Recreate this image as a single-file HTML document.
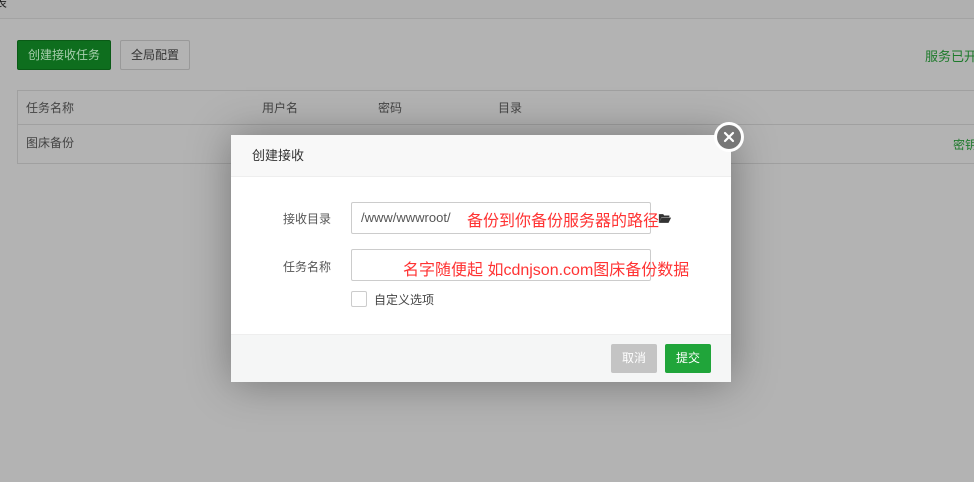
<!DOCTYPE html><html><head><meta charset="utf-8"><style>
*{margin:0;padding:0;box-sizing:border-box}
body{width:974px;height:482px;overflow:hidden;background:#b3b3b3;font-family:"Liberation Sans","Noto Sans CJK SC",sans-serif;font-size:12px;color:#333;position:relative}
.a{position:absolute}
</style></head><body>
<div class="a" style="left:0;top:0;width:974px;height:19px;border-bottom:1px solid #a3a3a3;background:#b0b0b0"></div>
<div class="a" style="left:-6px;top:-8px;font-size:13px;color:#222">表</div>
<div class="a" style="left:17px;top:40px;width:94px;height:30px;background:#0e6e1e;border:1px solid #0a5a16;border-radius:2px;color:#a8cfae;font-size:12px;line-height:28px;text-align:center">创建接收任务</div>
<div class="a" style="left:120px;top:40px;width:70px;height:30px;border:1px solid #999;border-radius:2px;color:#333;font-size:12px;line-height:28px;text-align:center">全局配置</div>
<div class="a" style="left:925px;top:46px;color:#1d7a2b;font-size:13px;white-space:nowrap">服务已开</div>
<div class="a" style="left:17px;top:90px;width:970px;height:74px;border:1px solid #a0a0a0"></div>
<div class="a" style="left:17px;top:124px;width:970px;border-top:1px solid #a0a0a0"></div>
<div class="a" style="left:26px;top:99px;font-size:12px;color:#444">任务名称</div>
<div class="a" style="left:262px;top:99px;font-size:12px;color:#444">用户名</div>
<div class="a" style="left:378px;top:99px;font-size:12px;color:#444">密码</div>
<div class="a" style="left:498px;top:99px;font-size:12px;color:#444">目录</div>
<div class="a" style="left:26px;top:134px;font-size:12px;color:#444">图床备份</div>
<div class="a" style="left:953px;top:136px;font-size:12px;color:#1d7a2b;white-space:nowrap">密钥</div>
<div class="a" style="left:231px;top:135px;width:500px;height:247px;background:#fff;box-shadow:1px 1px 40px rgba(0,0,0,.35)">
 <div class="a" style="left:0;top:0;width:500px;height:42px;background:#f8f8f8;border-bottom:1px solid #eee;padding-left:21px;line-height:42px;font-size:13px;color:#333">创建接收</div>
 <div class="a" style="left:0;top:199px;width:500px;height:48px;background:#f5f6f6;border-top:1px solid #eee"></div>
 <div class="a" style="left:380px;top:209px;width:46px;height:29px;background:#c4c4c4;border-radius:2px;color:#fff;text-align:center;line-height:29px">取消</div>
 <div class="a" style="left:434px;top:209px;width:46px;height:29px;background:#20a53a;border-radius:2px;color:#fff;text-align:center;line-height:29px">提交</div>
 <div class="a" style="left:52px;top:75px;color:#555">接收目录</div>
 <div class="a" style="left:52px;top:123px;color:#555">任务名称</div>
 <div class="a" style="left:120px;top:67px;width:300px;height:32px;border:1px solid #ccc;border-radius:2px;padding-left:9px;line-height:30px;color:#555;font-size:13px">/www/wwwroot/</div>
 <div class="a" style="left:120px;top:114px;width:300px;height:32px;border:1px solid #ccc;border-radius:2px"></div>
 <div class="a" style="left:236px;top:72px;color:#f33;font-size:16px;white-space:nowrap">备份到你备份服务器的路径</div>
 <svg class="a" style="left:427px;top:78px" width="14" height="11" viewBox="0 0 16 12"><path d="M1 1h5l1 1.5h6v2H4L1 11z" fill="#333"/><path d="M4 5h11l-3 6H1z" fill="#333"/></svg>
 <div class="a" style="left:172px;top:121px;color:#f33;font-size:16px;white-space:nowrap">名字随便起 如cdnjson.com图床备份数据</div>
 <div class="a" style="left:120px;top:156px;width:16px;height:16px;border:1px solid #ccc;border-radius:2px"></div>
 <div class="a" style="left:143px;top:156px;color:#444">自定义选项</div>
</div>
<div class="a" style="left:714px;top:122px;width:30px;height:30px;border-radius:50%;background:#fff"></div>
<div class="a" style="left:717px;top:125px;width:24px;height:24px;border-radius:50%;background:#777"></div>
<svg class="a" style="left:717px;top:125px" width="24" height="24"><path d="M8 8l8 8M16 8l-8 8" stroke="#fff" stroke-width="2.2" stroke-linecap="round"/></svg>
</body></html>
